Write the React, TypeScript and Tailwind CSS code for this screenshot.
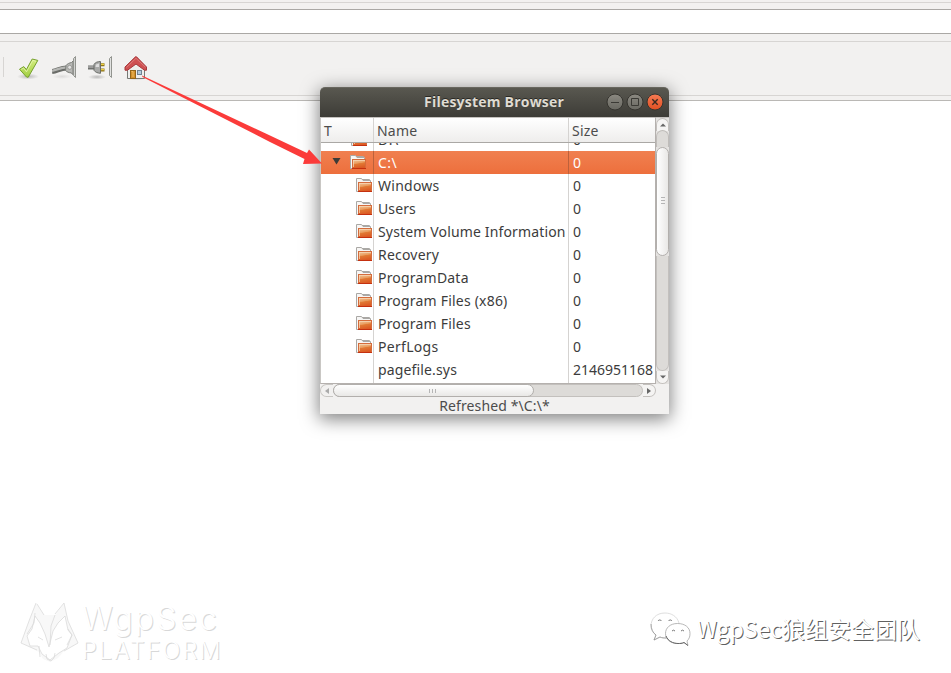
import React from "react";

const files = [
  { name: "Windows", ls: "tracking-[0.25px]" },
  { name: "Users", ls: "tracking-[0.1px]" },
  { name: "System Volume Information", ls: "tracking-[0.15px]" },
  { name: "Recovery", ls: "tracking-[0.2px]" },
  { name: "ProgramData", ls: "tracking-[0.2px]" },
  { name: "Program Files (x86)", ls: "tracking-[0.2px]" },
  { name: "Program Files", ls: "tracking-[0.2px]" },
  { name: "PerfLogs", ls: "tracking-[0.3px]" },
];

function Folder() {
  return (
    <svg width="16" height="15" viewBox="0 0 16 15" className="shrink-0">
      <defs>
        <linearGradient id="folder" x1="0" y1="0" x2="0.25" y2="1">
          <stop offset="0" stopColor="#f3cfa6" />
          <stop offset="0.48" stopColor="#e99a5c" />
          <stop offset="0.55" stopColor="#e17a35" />
          <stop offset="1" stopColor="#dc5a24" />
        </linearGradient>
      </defs>
      <path d="M.5 13.5V.5H5.5L7 2.5H14.5V13.5Z" fill="#f7f6f5" stroke="#aaa8a5" />
      <path d="M6 1.5H13.5V3" fill="none" stroke="#aaa8a5" />
      <rect x="2.5" y="4.5" width="13" height="9" fill="url(#folder)" stroke="#d56c3c" />
      <path d="M3 5.5H15M3.5 5V12" stroke="#f6d7b7" strokeOpacity=".75" />
      <path d="M2 13.5H16" stroke="#c4300f" />
    </svg>
  );
}

function Check() {
  return (
    <svg width="24" height="24" viewBox="0 0 24 24">
      <defs>
        <linearGradient id="check" x1="0" y1="0" x2="0" y2="1">
          <stop stopColor="#d4ed80" />
          <stop offset="1" stopColor="#a2cf42" />
        </linearGradient>
        <radialGradient id="shade">
          <stop stopColor="#777" stopOpacity=".45" />
          <stop offset="1" stopColor="#777" stopOpacity="0" />
        </radialGradient>
      </defs>
      <ellipse cx="11" cy="20.5" rx="11" ry="3" fill="url(#shade)" />
      <path d="M2.5 13.2 6.8 10.6 9.4 13.6 15.2 3 20.8 4.4 11.2 21.3 9.5 21Z" fill="url(#check)" stroke="#75a02d" strokeLinejoin="round" />
      <path d="M4.2 13.4 6.5 12.1 9.5 15.8 15.8 4.4 19 5.3" fill="none" stroke="#ecf8bd" strokeWidth=".7" />
    </svg>
  );
}

function PlugIn() {
  return (
    <svg width="26" height="24" viewBox="0 0 26 24">
      <ellipse cx="10" cy="20.5" rx="10" ry="2.5" fill="url(#shade)" opacity=".4" />
      <path d="M0 15.5C6 14.5 8 12 15 12" fill="none" stroke="#6a6c68" strokeWidth="5" />
      <path d="M0 14.8C6 13.8 8 11.3 15 11.3" fill="none" stroke="#b5b6b3" strokeWidth="2.2" />
      <path d="M14 9.5C15.5 7.5 17.5 7 19.5 6.5L21 5V18.5L19 16.8C17 16.8 15 16 13.5 14.5Z" fill="#b7b8b5" stroke="#7a7c78" />
      <circle cx="17.7" cy="11.3" r="2" fill="#e3e3e2" stroke="#858583" strokeWidth=".7" />
      <path d="M21.5 2.5 23.5.5V21.5L21.5 19.5Z" fill="#d2d3d1" stroke="#92948f" />
    </svg>
  );
}

function PlugOut() {
  return (
    <svg width="26" height="24" viewBox="0 0 26 24">
      <ellipse cx="9" cy="21" rx="9" ry="2.5" fill="url(#shade)" />
      <path d="M0 11.5H7" stroke="#6f716e" strokeWidth="4" />
      <path d="M0 11H7" stroke="#aaa" strokeWidth="1.5" />
      <path d="M6 8.5C7.5 6 9.5 5.8 12.5 5.5V17.3C9.5 17 7.5 16.5 6 14.3Z" fill="#a9aaa8" stroke="#6a6c68" />
      <path d="M8 8.5 11 7.5V11H7.5Z" fill="#ddd" />
      <path d="M13 8.7H16.5M13 14H16.5" stroke="#8d7518" strokeWidth="3" />
      <path d="M13 8.3H16M13 13.6H16" stroke="#edd040" strokeWidth="1.3" />
      <path d="M21.5 2.5 23.5.5V21.5L21.5 19.5Z" fill="#e2e3e1" stroke="#92948f" />
    </svg>
  );
}

function Home() {
  return (
    <svg width="24" height="25" viewBox="0 0 24 25">
      <ellipse cx="12" cy="22" rx="11" ry="2.2" fill="url(#shade)" />
      <path d="M3.5 11 12 3.5 20.5 11V22.5H3.5Z" fill="#eeeeec" stroke="#777975" />
      <rect x="6.5" y="14.5" width="5" height="8" fill="#d3912c" stroke="#94661a" />
      <path d="M7.5 15.5H9V21" stroke="#edbd61" fill="none" />
      <rect x="13.5" y="14.5" width="4" height="4" fill="#b4cadb" stroke="#708494" />
      <path d="M1 11 11.5 .8H12.5L22.5 11V14.2H20.5L12 8 3.5 14.2H1Z" fill="#cf5052" stroke="#a5383b" strokeLinejoin="round" />
      <path d="M2.5 11.3 12 2.3 21.5 11.3" fill="none" stroke="#e08583" strokeWidth=".8" />
    </svg>
  );
}

function WinButton({ kind }: { kind: "min" | "max" | "close" }) {
  return (
    <svg width="18" height="18" viewBox="0 0 18 18">
      <defs>
        <linearGradient id="btnGrey" x1="0" y1="0" x2="0" y2="1">
          <stop stopColor="#8b8981" />
          <stop offset="1" stopColor="#696861" />
        </linearGradient>
        <linearGradient id="btnOrange" x1="0" y1="0" x2="0" y2="1">
          <stop stopColor="#f67b54" />
          <stop offset="1" stopColor="#e04f22" />
        </linearGradient>
      </defs>
      <circle cx="9" cy="9" r="8" fill={kind === "close" ? "url(#btnOrange)" : "url(#btnGrey)"} stroke="#35342f" />
      {kind === "min" && <path d="M5 9.5H13" stroke="#3b3a35" />}
      {kind === "max" && <path d="M5.5 5.5H12.5V12.5H5.5Z" fill="none" stroke="#3b3a35" />}
      {kind === "close" && <path d="M6.3 6.3 11.7 11.7M11.7 6.3 6.3 11.7" stroke="#3b2a20" strokeWidth="1.4" />}
    </svg>
  );
}

function Wolf() {
  return (
    <svg width="60" height="62" viewBox="0 0 60 62" fill="none" stroke="#dadada" strokeWidth=".8">
      <path d="M16 2 24 14H35L44 2 48 20 58 42 43 51 38 57 30 61 23 58 19 51 1 42 9 20Z" fill="#f8f8f8" stroke="none" />
      <path d="M15 15 20 22 25 33 29 46 33 30 38 22 45 15 48 29 52 34 47 47 39 52 30 59 22 53 18 45 10 45 7 35 12 28Z" fill="#fff" />
      <path d="M24 14H35L31 25 29.5 38 24 25Z" fill="#f8f8f8" stroke="none" />
      <path d="M16 2 9 20 1 42 17 49M17 3 24 14M35 13 44 2 48 20 58 42 44 50M35 14 31 25 30 44M18 36 23 39M35 39 42 36M19 45 20 56M48 28 52 34 47 44M26 53 27 58 31 60 34 57 35 52M15 12 14 22 7 33" />
    </svg>
  );
}

function WeChat() {
  return (
    <svg width="42" height="36" viewBox="0 0 42 36" fill="#fff" stroke="#d0d0d0" strokeWidth=".7">
      <path d="M29 11C27 4 21 1 15 1 6 1 1 7 1 14c0 4 2 7 5 9l-2 5 6-3c2 1 4 1 7 1" />
      <path d="M1 12c0 5 2 9 5 11l-2 5 6-3c2 1 4 1 6 1" fill="none" stroke="#888" />
      <path d="M27.5 11.5C20 11.5 15.5 16 15.5 21.5S20 31.5 28 31.5c2 0 4 0 6-1l4 3-1-4.5c2-2 3-4 3-7.5 0-6-5-10-12.5-10Z" stroke="#999" />
      <path d="M16 24c2 5 7 7.5 12 7.5 2 0 4 0 6-1l4 3" fill="none" stroke="#666" strokeWidth="1" />
      <path d="M8 9a2 2 0 0 1 3.5 0M18.5 9a2 2 0 0 1 3.5 0M22 19a2 2 0 0 1 3 0M31 19a2 2 0 0 1 3 0" fill="none" stroke="#777" strokeWidth="1" />
    </svg>
  );
}

function FileRow({ children, name, size, ls = "" }: { children?: React.ReactNode; name: string; size: string; ls?: string }) {
  return (
    <div className="flex h-[23px] shrink-0 leading-[23px]">
      <div className="flex w-[53px] items-center justify-end border-r border-[#d5d3d1] pr-px">{children}</div>
      <div className={"w-[195px] whitespace-nowrap border-r border-[#d5d3d1] pl-1 " + ls}>{name}</div>
      <div className="pl-1">{size}</div>
    </div>
  );
}

export default function App() {
  return (
    <div className="relative flex h-[673px] w-[951px] flex-col overflow-hidden bg-white font-['Noto_Sans','Noto_Sans_CJK_SC',sans-serif]">
      <div className="h-[10px] shrink-0 border-b border-[#aaa8a5] bg-[#f2f1f0] pt-[2px]">
        <div className="h-px bg-[#d7d5d3]" />
      </div>
      <div className="h-[23px] shrink-0 bg-white" />
      <div className="flex h-[68px] shrink-0 flex-col border-y border-t-[#aaa8a5] border-b-[#bab8b5] bg-[#f2f1f0] pt-[7px]">
        <div className="flex h-[55px] shrink-0 items-center border-y border-[#d7d5d3]">
          <div className="mb-[3px] ml-[3px] h-5 w-px bg-[#d7d5d3]" />
          <div className="mb-[1px] ml-[13px] flex items-center">
            <Check />
            <div className="ml-[11px]"><PlugIn /></div>
            <div className="ml-[10px]"><PlugOut /></div>
            <div className="ml-[10px]"><Home /></div>
          </div>
        </div>
      </div>
      <div className="flex-1" />
      <div className="flex h-[78px] shrink-0 items-start justify-between pl-5 pr-[31px]">
        <div className="flex pt-[6px]">
          <Wolf />
          <div className="pl-[2px] font-[Inter,sans-serif] font-light text-white [text-shadow:1px_1px_0_#d8d8d8]">
            <div className="h-[33px] whitespace-nowrap text-[32px] leading-[36px] tracking-[2.1px]">WgpSec</div>
            <div className="whitespace-nowrap text-[23.5px] leading-[34px] tracking-[2px]">PLATFORM</div>
          </div>
        </div>
        <div className="flex pt-[17px]">
          <WeChat />
          <div className="ml-[5px] whitespace-nowrap font-['Noto_Sans_CJK_SC',sans-serif] text-[23px] leading-[32px] text-white [text-shadow:1px_1px_0_#606060]">WgpSec狼组安全团队</div>
        </div>
      </div>

      <div className="absolute left-[320px] top-[87px] flex h-[327px] w-[349px] flex-col rounded-t-[5px] bg-[#f2f1f0] text-[14px] text-[#3c3c3c] shadow-[0_4px_18px_1px_rgba(0,0,0,0.5)]">
        <div className="flex h-[30px] shrink-0 items-center rounded-t-[5px] border-t border-[#68675f] bg-linear-to-b from-[#595850] to-[#3d3c37] pl-[104px] pr-[5px]">
          <div className="mb-[2px] w-[142px] whitespace-nowrap font-['Open_Sans',sans-serif] text-[14px] font-bold leading-[28px] tracking-[0.22px] text-[#dfdbd2] [text-shadow:0_-1px_0_#292824]">Filesystem Browser</div>
          <div className="mb-px ml-auto flex gap-[2px]">
            <WinButton kind="min" />
            <WinButton kind="max" />
            <WinButton kind="close" />
          </div>
        </div>
        <div className="flex h-[267px] shrink-0">
          <div className="flex w-[336px] flex-col border-b border-l border-r border-b-[#b5b1ae] border-l-[#c9c7c4] border-r-[#b5b1ae] bg-white">
            <div className="flex h-[26px] shrink-0 border-b border-t border-b-[#aaa8a5] border-t-[#c5c2bf] bg-linear-to-b from-white to-[#eeedec] leading-[26px] text-[#4c4c4c]">
              <div className="w-[53px] border-r border-[#d5d3d1] pl-[3px]">T</div>
              <div className="w-[195px] border-r border-[#d5d3d1] pl-[3px] tracking-[0.2px]">Name</div>
              <div className="pl-[3px] tracking-[0.2px]">Size</div>
            </div>
            <div className="flex h-[8px] shrink-0 flex-col justify-end overflow-hidden">
              <FileRow name="D:\" size="0" ls="tracking-[0.5px]"><div className="mr-[5px]"><Folder /></div></FileRow>
            </div>
            <div className="flex h-[23px] shrink-0 bg-linear-to-b from-[#f08050] to-[#ed6f3c] leading-[23px] text-white">
              <div className="flex w-[53px] items-center border-r border-[#bd613b] pl-[11px]">
                <svg width="9" height="8" viewBox="0 0 9 8" className="mb-[3px]"><path d="M.5 1H8.5L4.5 7.5Z" fill="#3c3b37" /></svg>
                <div className="ml-[9px]"><Folder /></div>
              </div>
              <div className="w-[195px] border-r border-[#bd613b] pl-1 tracking-[0.4px]">C:\</div>
              <div className="pl-1">0</div>
            </div>
            {files.map((f) => (
              <FileRow key={f.name} name={f.name} size="0" ls={f.ls}><Folder /></FileRow>
            ))}
            <FileRow name="pagefile.sys" size="2146951168" ls="tracking-[0.15px]" />
            <div className="flex flex-1">
              <div className="w-[53px] border-r border-[#d5d3d1]" />
              <div className="w-[195px] border-r border-[#d5d3d1]" />
            </div>
          </div>
          <div className="flex w-[13px] flex-col items-center border-t border-[#c5c2bf] bg-[#e4e2e0]">
            <div className="flex h-[13px] w-[13px] items-center justify-center rounded-t-full border border-b-0 border-[#c3c0bd] bg-[#f5f4f3]">
              <svg width="6" height="4"><path d="M0 3.5 3 .5 6 3.5Z" fill="#666" /></svg>
            </div>
            <div className="-mt-px h-[17px] w-[13px] rounded-t-full border border-b-0 border-[#bfbcb9] bg-[#dddbd8]" />
            <div className="flex h-[109px] w-[13px] flex-col items-center justify-center gap-[2px] rounded-full border border-[#b2afac] bg-linear-to-r from-white to-[#e9e8e6] pb-[2px]">
              <div className="h-px w-[4px] bg-[#b5b5b5]" />
              <div className="h-px w-[4px] bg-[#b5b5b5]" />
              <div className="h-px w-[4px] bg-[#b5b5b5]" />
            </div>
            <div className="w-[13px] flex-1 rounded-b-full border-x border-b border-[#c3c0bd] bg-[#dddbd8]" />
            <div className="flex h-[13px] w-[13px] items-center justify-center rounded-b-full border border-t-0 border-[#c3c0bd] bg-[#f5f4f3]">
              <svg width="6" height="4"><path d="M0 .5 3 3.5 6 .5Z" fill="#666" /></svg>
            </div>
          </div>
        </div>
        <div className="flex h-[13px] w-[336px] shrink-0 bg-[#f2f1f0]">
          <div className="flex h-[13px] w-[13px] items-center justify-center rounded-l-full border border-r-0 border-[#c9c7c4]">
            <svg width="4" height="6"><path d="M4 0V6L0 3Z" fill="#aaa" /></svg>
          </div>
          <div className="flex flex-1 rounded-full border border-[#c3c0bd] bg-[#dddbd8]">
            <div className="-my-px -ml-px flex h-[13px] w-[201px] items-center justify-center gap-[2px] rounded-full border border-[#b2afac] bg-linear-to-b from-white to-[#e9e8e6] pr-[2px]">
              <div className="h-[4px] w-px bg-[#b5b5b5]" />
              <div className="h-[4px] w-px bg-[#b5b5b5]" />
              <div className="h-[4px] w-px bg-[#b5b5b5]" />
            </div>
          </div>
          <div className="flex h-[13px] w-[13px] items-center justify-center rounded-r-full border border-l-0 border-[#c3c0bd] bg-[#f5f4f3]">
            <svg width="4" height="6"><path d="M0 0V6L4 3Z" fill="#666" /></svg>
          </div>
        </div>
        <div className="h-[17px] text-center leading-[18px] tracking-[0.12px] text-[#4c4c4c]">Refreshed *\C:\*</div>
      </div>

      <svg width="184" height="96" viewBox="142 74 184 96" className="pointer-events-none absolute left-[142px] top-[74px]">
        <path d="M142 75.5 270 135.5 307 153 309 149.5 322 163.5 303 164 304.5 159 270 142 142.5 77Z" fill="#fb3b3a" />
      </svg>
    </div>
  );
}
